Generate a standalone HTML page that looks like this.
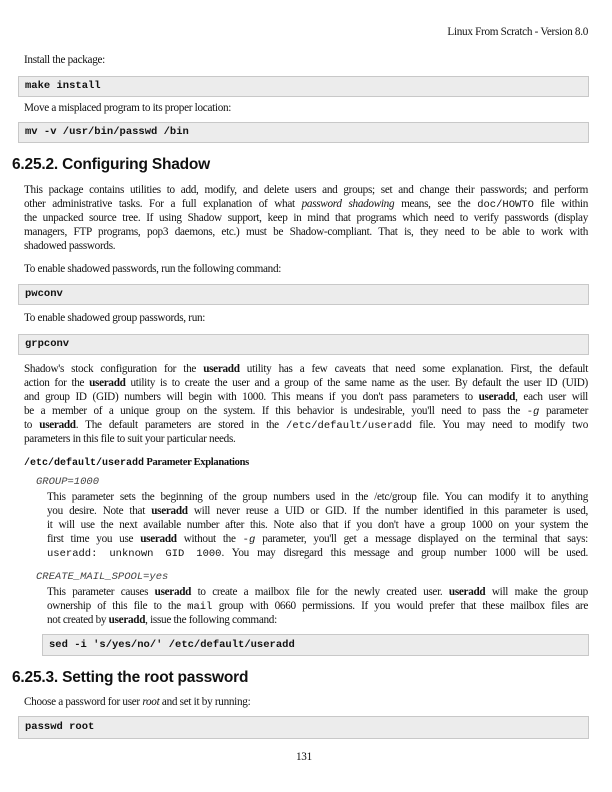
<!DOCTYPE html>
<html><head><meta charset="utf-8"><style>
body{margin:0;width:612px;height:792px;background:#fff;position:relative;font-family:"Liberation Serif",serif;font-size:11.2px;letter-spacing:-0.3px;color:#111;overflow:hidden}
.a{position:absolute;white-space:nowrap}
.j{position:absolute;text-align:justify;text-align-last:justify;white-space:nowrap}
.box{position:absolute;left:18px;width:571px;background:#ececec;border:1px solid #c8c8c8;box-sizing:border-box;font-family:"Liberation Mono",monospace;font-weight:bold;font-size:10.5px;letter-spacing:0;padding-left:6px}
h2{position:absolute;margin:0;font-family:"Liberation Sans",sans-serif;font-weight:bold;font-size:15.5px;letter-spacing:-0.2px;left:12px}
.m{font-family:"Liberation Mono",monospace;letter-spacing:0;font-size:10.5px}
.it{font-style:italic}
</style></head><body>
<div class="a" style="right:24px;top:26px">Linux From Scratch - Version 8.0</div>
<div class="a" style="left:24px;top:54px">Install the package:</div>
<div class="box" style="top:76px;height:21px;line-height:19px">make install</div>
<div class="a" style="left:24px;top:102px">Move a misplaced program to its proper location:</div>
<div class="box" style="top:122px;height:21px;line-height:19px">mv -v /usr/bin/passwd /bin</div>
<h2 style="top:156px">6.25.2. Configuring Shadow</h2>
<div class="j" style="left:24px;width:564px;top:184px">This package contains utilities to add, modify, and delete users and groups; set and change their passwords; and perform</div>
<div class="j" style="left:24px;width:564px;top:198px">other administrative tasks. For a full explanation of what <i>password shadowing</i> means, see the <span class="m">doc/HOWTO</span> file within</div>
<div class="j" style="left:24px;width:564px;top:212px">the unpacked source tree. If using Shadow support, keep in mind that programs which need to verify passwords (display</div>
<div class="j" style="left:24px;width:564px;top:226px">managers, FTP programs, pop3 daemons, etc.) must be Shadow-compliant. That is, they need to be able to work with</div>
<div class="a" style="left:24px;top:240px">shadowed passwords.</div>
<div class="a" style="left:24px;top:263px">To enable shadowed passwords, run the following command:</div>
<div class="box" style="top:284px;height:21px;line-height:19px">pwconv</div>
<div class="a" style="left:24px;top:312px">To enable shadowed group passwords, run:</div>
<div class="box" style="top:334px;height:21px;line-height:19px">grpconv</div>
<div class="j" style="left:24px;width:564px;top:363px">Shadow's stock configuration for the <b>useradd</b> utility has a few caveats that need some explanation. First, the default</div>
<div class="j" style="left:24px;width:564px;top:377px">action for the <b>useradd</b> utility is to create the user and a group of the same name as the user. By default the user ID (UID)</div>
<div class="j" style="left:24px;width:564px;top:391px">and group ID (GID) numbers will begin with 1000. This means if you don't pass parameters to <b>useradd</b>, each user will</div>
<div class="j" style="left:24px;width:564px;top:405px">be a member of a unique group on the system. If this behavior is undesirable, you'll need to pass the <span class="m">-<i>g</i></span> parameter</div>
<div class="j" style="left:24px;width:564px;top:419px">to <b>useradd</b>. The default parameters are stored in the <span class="m">/etc/default/useradd</span> file. You may need to modify two</div>
<div class="a" style="left:24px;top:433px">parameters in this file to suit your particular needs.</div>
<div class="a" style="left:24px;top:457px;font-weight:bold;font-size:10.5px"><span class="m" style="font-size:10px">/etc/default/useradd</span> Parameter Explanations</div>
<div class="a m it" style="left:36px;top:476px;color:#444">GROUP=1000</div>
<div class="j" style="left:47px;width:541px;top:491px">This parameter sets the beginning of the group numbers used in the /etc/group file. You can modify it to anything</div>
<div class="j" style="left:47px;width:541px;top:505px">you desire. Note that <b>useradd</b> will never reuse a UID or GID. If the number identified in this parameter is used,</div>
<div class="j" style="left:47px;width:541px;top:519px">it will use the next available number after this. Note also that if you don't have a group 1000 on your system the</div>
<div class="j" style="left:47px;width:541px;top:533px">first time you use <b>useradd</b> without the <span class="m">-<i>g</i></span> parameter, you'll get a message displayed on the terminal that says:</div>
<div class="j" style="left:47px;width:541px;top:547px"><span class="m">useradd: unknown GID 1000</span>. You may disregard this message and group number 1000 will be used.</div>
<div class="a m it" style="left:36px;top:571px;color:#444">CREATE_MAIL_SPOOL=yes</div>
<div class="j" style="left:47px;width:541px;top:586px">This parameter causes <b>useradd</b> to create a mailbox file for the newly created user. <b>useradd</b> will make the group</div>
<div class="j" style="left:47px;width:541px;top:600px">ownership of this file to the <span class="m">mail</span> group with 0660 permissions. If you would prefer that these mailbox files are</div>
<div class="a" style="left:47px;top:614px">not created by <b>useradd</b>, issue the following command:</div>
<div class="box" style="left:42px;width:547px;top:634px;height:22px;line-height:20px">sed -i 's/yes/no/' /etc/default/useradd</div>
<h2 style="top:669px">6.25.3. Setting the root password</h2>
<div class="a" style="left:24px;top:696px">Choose a password for user <i>root</i> and set it by running:</div>
<div class="box" style="top:716px;height:23px;line-height:21px">passwd root</div>
<div class="a" style="left:296px;top:751px">131</div>
</body></html>
